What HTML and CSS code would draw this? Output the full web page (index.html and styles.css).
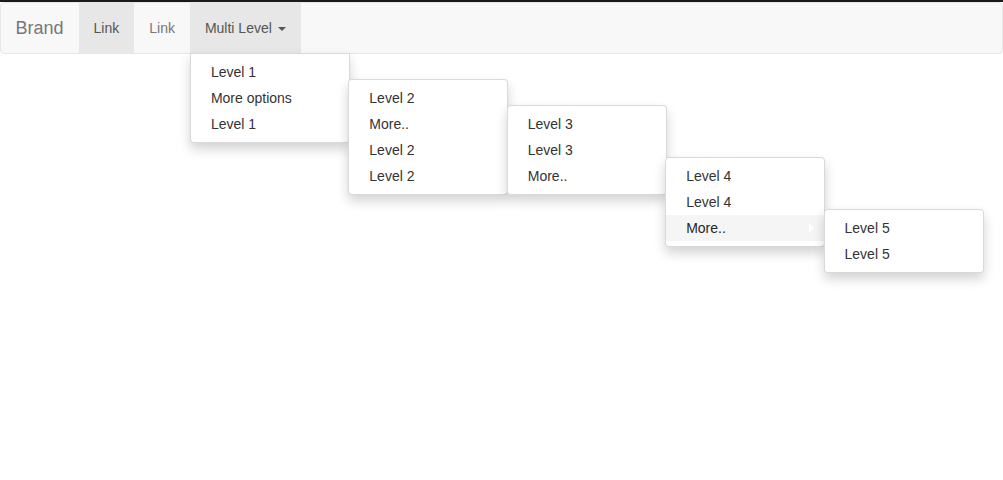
FILE: index.html
```html
<!DOCTYPE html>
<html>
<head>
    <title>Multi Level Dropdown</title>
    <link rel="stylesheet" href="styles.css">
</head>
<body>
    <nav class="navbar">
        <a class="navbar-brand" href="#">Brand</a>
        <ul class="nav">
            <li class="active"><a href="#">Link</a></li>
            <li><a href="#">Link</a></li>
            <li class="dropdown open">
                <a href="#">Multi Level <span class="caret"></span></a>
                <ul class="dropdown-menu">
                    <li><a href="#">Level 1</a></li>
                    <li class="dropdown-submenu">
                        <a href="#">More options</a>
                        <ul class="dropdown-menu">
                            <li><a href="#">Level 2</a></li>
                            <li class="dropdown-submenu">
                                <a href="#">More..</a>
                                <ul class="dropdown-menu">
                                    <li><a href="#">Level 3</a></li>
                                    <li><a href="#">Level 3</a></li>
                                    <li class="dropdown-submenu">
                                        <a href="#">More..</a>
                                        <ul class="dropdown-menu">
                                            <li><a href="#">Level 4</a></li>
                                            <li><a href="#">Level 4</a></li>
                                            <li class="dropdown-submenu">
                                                <a href="#" class="hover">More..</a>
                                                <ul class="dropdown-menu">
                                                    <li><a href="#">Level 5</a></li>
                                                    <li><a href="#">Level 5</a></li>
                                                </ul>
                                            </li>
                                        </ul>
                                    </li>
                                </ul>
                            </li>
                            <li><a href="#">Level 2</a></li>
                            <li><a href="#">Level 2</a></li>
                        </ul>
                    </li>
                    <li><a href="#">Level 1</a></li>
                </ul>
            </li>
        </ul>
    </nav>
</body>
</html>
```

FILE: styles.css
```css
html {
    background: #fff;
}
body {
    margin: 0;
    min-height: 478px;
    border-top: 2px solid #1a1a1a;
    font-family: "Liberation Sans", Arial, sans-serif;
    font-size: 14px;
    line-height: 20px;
    color: #333;
    background: #fff;
}
a {
    text-decoration: none;
}
ul {
    list-style: none;
    margin: 0;
    padding: 0;
}
.navbar {
    position: relative;
    z-index: 1;
    display: flex;
    height: 50px;
    background: #f8f8f8;
    border: 1px solid #e7e7e7;
    border-radius: 4px;
}
.navbar-brand {
    padding: 15px 15px 15px 14.5px;
    font-size: 18px;
    color: #777;
}
.nav {
    display: flex;
}
.nav > li {
    position: relative;
}
.nav > li > a {
    display: block;
    padding: 15px;
    color: #777;
}
.nav > li.active > a,
.nav > li.open > a {
    background: #e7e7e7;
    color: #555;
}
.caret {
    display: inline-block;
    width: 0;
    height: 0;
    margin-left: 2px;
    vertical-align: middle;
    border-top: 4px solid;
    border-left: 4px solid transparent;
    border-right: 4px solid transparent;
}
.dropdown-menu {
    position: absolute;
    top: 100%;
    left: 0;
    z-index: 10;
    display: block;
    width: 158px;
    padding: 5px 0;
    background: #fff;
    border: 1px solid rgba(0, 0, 0, .15);
    border-radius: 0 0 4px 4px;
    box-shadow: 0 6px 12px rgba(0, 0, 0, .175);
}
.dropdown-menu li {
    position: relative;
    display: block;
}
.dropdown-menu a {
    display: block;
    padding: 3px 20px;
    color: #333;
    white-space: nowrap;
}
.dropdown-menu a.hover {
    background: #f5f5f5;
    color: #262626;
}
.dropdown-submenu > .dropdown-menu {
    top: 0;
    left: 100%;
    margin-top: -6px;
    margin-left: -0.6px;
    border-radius: 4px;
}
.dropdown-submenu > a:after {
    content: " ";
    display: block;
    float: right;
    width: 0;
    height: 0;
    margin-top: 5px;
    margin-right: -10px;
    border-style: solid;
    border-color: transparent;
    border-width: 5px 0 5px 5px;
    border-left-color: #fff;
}
```
